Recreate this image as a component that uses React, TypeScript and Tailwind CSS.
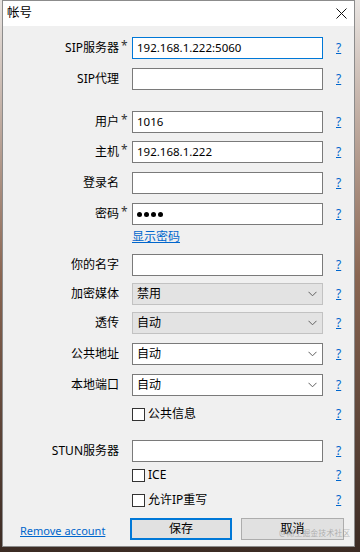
import type { ReactNode } from 'react';

const font = { fontFamily: '"Noto Sans", "Noto Sans CJK SC", sans-serif' };

function Help() {
  return (
    <a className="ml-[13px] w-[8px] text-[12px] leading-none text-[#0066cc] underline cursor-pointer">?</a>
  );
}

function Row({ label, star, children, className = '' }: { label?: string; star?: boolean; children: ReactNode; className?: string }) {
  return (
    <div className={`flex items-center h-[22px] ${className}`}>
      <div className="w-[116px] text-right text-[12px] text-black whitespace-nowrap">{label}</div>
      <div className="w-[13px] h-full pl-[2px] text-[12px] leading-[18px] text-[#333]">{star ? '*' : ''}</div>
      <div className="w-[191px] h-full">{children}</div>
      <Help />
    </div>
  );
}

function TextBox({ value, focused }: { value?: string; focused?: boolean }) {
  return (
    <div
      className={`h-full bg-white border flex items-center pl-[4px] text-[11.5px] text-black ${
        focused ? 'border-[#0078d7]' : 'border-[#7a7a7a]'
      }`}
    >
      {value}
    </div>
  );
}

function Select({ value, disabled }: { value: string; disabled?: boolean }) {
  return (
    <div
      className={`h-full border flex items-center justify-between pl-[4px] pr-[5px] text-[12px] text-black ${
        disabled ? 'bg-[#e3e3e3] border-[#c2c2c2]' : 'bg-white border-[#7a7a7a]'
      }`}
    >
      <span>{value}</span>
      <svg width="9" height="6" viewBox="0 0 9 6" fill="none">
        <path d="M0.5 0.8 L4.5 4.8 L8.5 0.8" stroke="#606060" strokeWidth="1" />
      </svg>
    </div>
  );
}

function Check({ label, className = '' }: { label: string; className?: string }) {
  return (
    <div className={`flex items-center h-[16px] ${className}`}>
      <div className="w-[129px]" />
      <div className="w-[191px] flex items-center gap-[3px]">
        <div className="w-[13px] h-[13px] border border-[#333333] bg-white" />
        <span className="text-[12px] text-black leading-none">{label}</span>
      </div>
      <Help />
    </div>
  );
}

export default function App() {
  return (
    <div
      className="relative w-[360px] h-[552px] overflow-hidden bg-gradient-to-b from-[#e9e5e2] via-[#8a6652] to-[#3b2b24]"
      style={font}
    >
      <div className="ml-[2px] w-[353px] h-[547px] flex flex-col border border-[#8c8c8c] bg-[#f0f0f0]">
        {/* Title bar */}
        <div className="h-[25px] bg-white flex items-center justify-between pl-[4px] pr-[7px]">
          <span className="text-[12.5px] text-black">帐号</span>
          <svg width="11" height="11" viewBox="0 0 11 11" fill="none">
            <path d="M0.5 0.5 L10.5 10.5 M10.5 0.5 L0.5 10.5" stroke="#111" strokeWidth="1" />
          </svg>
        </div>

        {/* Form */}
        <div className="flex flex-col pt-[11px]">
          <Row label="SIP服务器" star>
            <TextBox value="192.168.1.222:5060" focused />
          </Row>
          <Row label="SIP代理" className="mt-[9px]">
            <TextBox />
          </Row>
          <Row label="用户" star className="mt-[21px]">
            <TextBox value="1016" />
          </Row>
          <Row label="主机" star className="mt-[8px]">
            <TextBox value="192.168.1.222" />
          </Row>
          <Row label="登录名" className="mt-[9px]">
            <TextBox />
          </Row>
          <Row label="密码" star className="mt-[9px]">
            <div className="h-full bg-white border border-[#7a7a7a] flex items-center gap-[2px] pl-[4px]">
              <span className="w-[5px] h-[5px] rounded-full bg-black" />
              <span className="w-[5px] h-[5px] rounded-full bg-black" />
              <span className="w-[5px] h-[5px] rounded-full bg-black" />
              <span className="w-[5px] h-[5px] rounded-full bg-black" />
            </div>
          </Row>
          <div className="flex h-[16px] mt-[4px] items-center">
            <div className="w-[129px]" />
            <a className="text-[12px] leading-none text-[#0066cc] underline cursor-pointer">显示密码</a>
          </div>
          <Row label="你的名字" className="mt-[9px]">
            <TextBox />
          </Row>
          <Row label="加密媒体" className="mt-[7px]">
            <Select value="禁用" disabled />
          </Row>
          <Row label="透传" className="mt-[7px]">
            <Select value="自动" disabled />
          </Row>
          <Row label="公共地址" className="mt-[9px]">
            <Select value="自动" />
          </Row>
          <Row label="本地端口" className="mt-[9px]">
            <Select value="自动" />
          </Row>
          <Check label="公共信息" className="mt-[10px]" />
          <Row label="STUN服务器" className="mt-[18px]">
            <TextBox />
          </Row>
          <Check label="ICE" className="mt-[5px]" />
          <Check label="允许IP重写" className="mt-[9px]" />

          {/* Actions */}
          <div className="flex items-center h-[22px] mt-[10px]">
            <div className="w-[127px] pl-[17px]">
              <a className="text-[11px] text-[#0066cc] underline cursor-pointer whitespace-nowrap">Remove account</a>
            </div>
            <button className="w-[102px] h-[22px] border-2 border-[#0078d7] bg-[#e1e1e1] text-[12px] text-black">
              保存
            </button>
            <button className="ml-[9px] w-[103px] h-[22px] border border-[#adadad] bg-[#e1e1e1] text-[12px] text-black">
              取消
            </button>
          </div>
        </div>
      </div>
      <span className="absolute left-[279px] top-[529px] text-[8px] leading-none text-[#8a8a8a]/60 whitespace-nowrap">
        @稀土掘金技术社区
      </span>
    </div>
  );
}
